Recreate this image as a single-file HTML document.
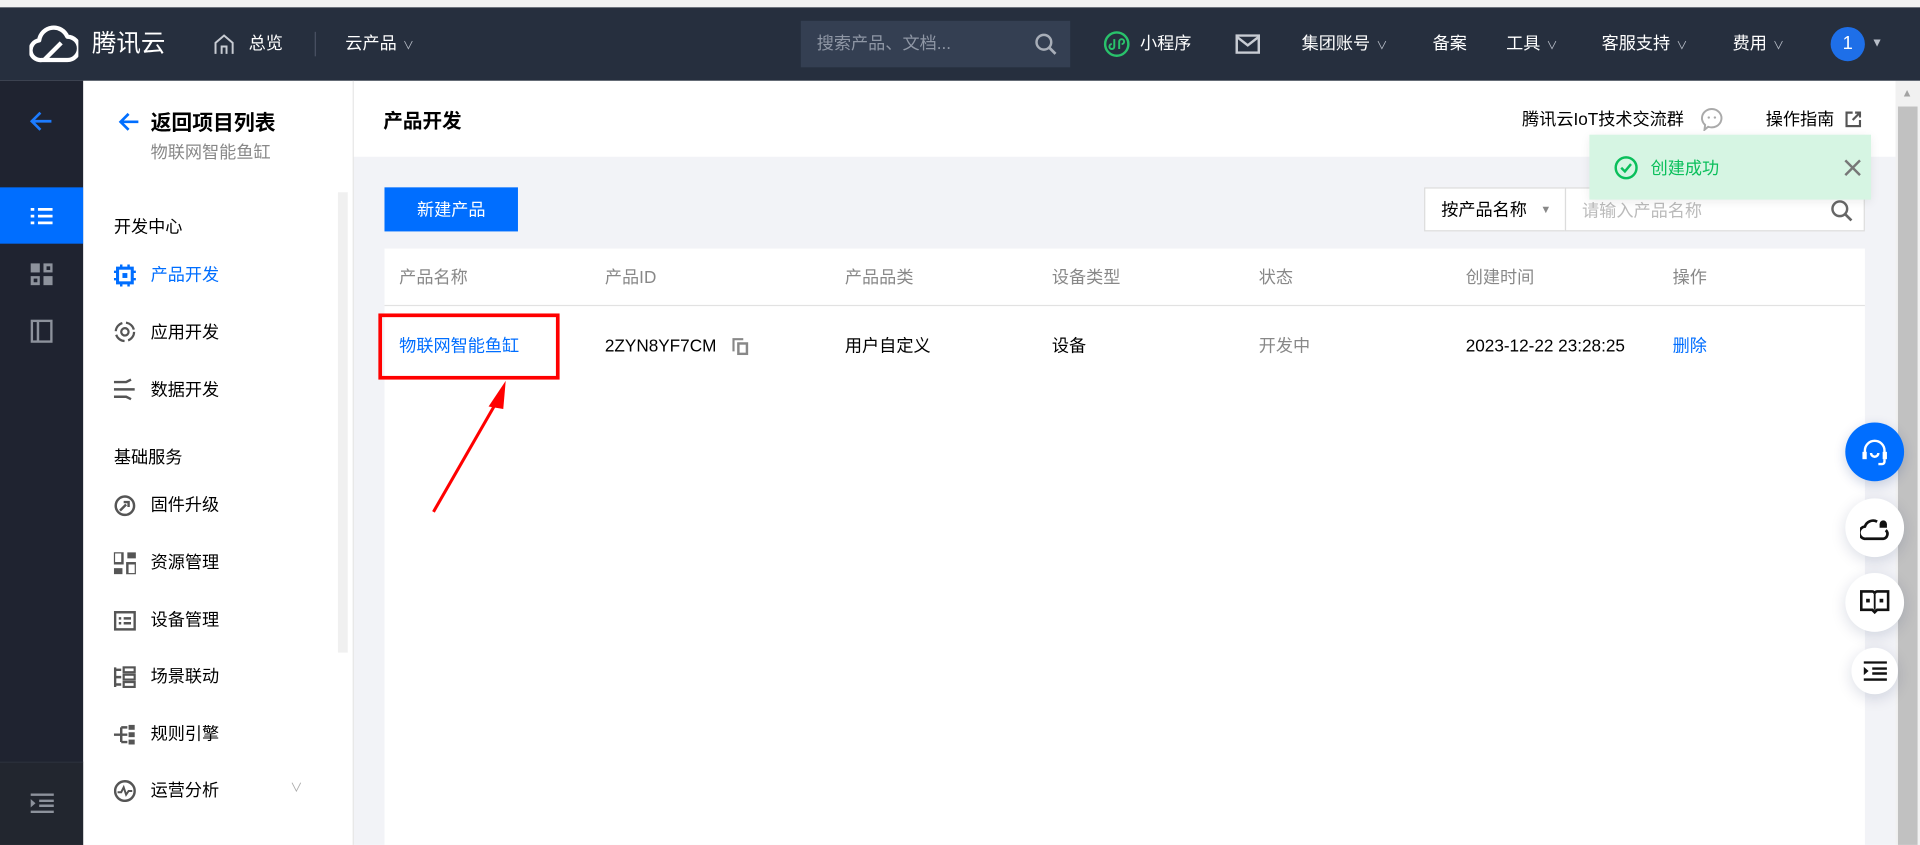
<!DOCTYPE html>
<html><head><meta charset="utf-8"><style>
*{margin:0;padding:0;box-sizing:border-box}
html,body{width:1920px;height:845px;overflow:hidden;background:#fff}
#s{position:absolute;left:0;top:0;width:1568px;height:690px;transform:scale(1.22449);transform-origin:0 0;font-family:"Liberation Sans","Noto Sans CJK SC",sans-serif;font-size:14px;color:#000;background:#f2f3f7}
.a{position:absolute}
.t{position:absolute;white-space:nowrap;line-height:1}
.nav .t{color:#fff;font-size:14px}
.car{font-size:9px;color:#b8bec8;margin-left:5px}
.side .t{font-size:14px;color:#000}
.ic{position:absolute}
</style></head><body><div id="s">
<div class="a" style="left:0;top:0;width:1568px;height:6px;background:#f1f1f1"></div>
<!-- navbar -->
<div class="a nav" style="left:0;top:6px;width:1568px;height:60px;background:#262f3e">
 <svg class="ic" style="left:24px;top:13px" width="40" height="34" viewBox="0 0 40 34"><path d="M10 30 A8 8 0 0 1 8 14 A12 12 0 0 1 31 11 A9.5 9.5 0 0 1 31 30 Z M12 30 L26 16" fill="none" stroke="#fff" stroke-width="3.5" stroke-linejoin="round"/></svg>
 <div class="t" style="left:75px;top:20px;font-size:20px">腾讯云</div>
 <svg class="ic" style="left:174px;top:21px" width="18" height="18" viewBox="0 0 18 18"><path d="M2 17V8L9 2l7 6v9M7 17v-6h4v6" fill="none" stroke="#c8ccd3" stroke-width="1.6"/></svg>
 <div class="t" style="left:203px;top:22px">总览</div>
 <div class="a" style="left:257px;top:20px;width:1px;height:20px;background:#4a5263"></div>
 <div class="t" style="left:282px;top:22px">云产品<span class="car">∨</span></div>
 <div class="a" style="left:654px;top:11px;width:220px;height:38px;background:#343f52"></div>
 <div class="t" style="left:667px;top:22px;color:#8f97a5">搜索产品、文档...</div>
 <svg class="ic" style="left:845px;top:21px" width="18" height="18" viewBox="0 0 18 18"><circle cx="7.5" cy="7.5" r="6" fill="none" stroke="#a8aeb8" stroke-width="2"/><path d="M12 12l5 5" stroke="#a8aeb8" stroke-width="2.2"/></svg>
 <svg class="ic" style="left:901px;top:19px" width="22" height="22" viewBox="0 0 22 22"><circle cx="11" cy="11" r="9.5" fill="none" stroke="#29c26b" stroke-width="2"/><path d="M9 7v6a2 2 0 1 1-2-2M13 15V9a2 2 0 1 1 2 2" fill="none" stroke="#29c26b" stroke-width="1.6"/></svg>
 <div class="t" style="left:931px;top:22px">小程序</div>
 <svg class="ic" style="left:1009px;top:22px" width="20" height="16" viewBox="0 0 20 16"><rect x="1" y="1" width="18" height="14" fill="none" stroke="#c8ccd3" stroke-width="2"/><path d="M1 2l9 7 9-7" fill="none" stroke="#c8ccd3" stroke-width="2"/></svg>
 <div class="t" style="left:1063px;top:22px">集团账号<span class="car">∨</span></div>
 <div class="t" style="left:1170px;top:22px">备案</div>
 <div class="t" style="left:1230px;top:22px">工具<span class="car">∨</span></div>
 <div class="t" style="left:1308px;top:22px">客服支持<span class="car">∨</span></div>
 <div class="t" style="left:1415px;top:22px">费用<span class="car">∨</span></div>
 <div class="a" style="left:1495px;top:16px;width:28px;height:28px;border-radius:50%;background:#1e6fe8;color:#fff;text-align:center;line-height:28px;font-size:15px">1</div>
 <div class="t" style="left:1528px;top:25px;font-size:10px;color:#b8bec8">▼</div>
</div>
<!-- rail -->
<div class="a" style="left:0;top:66px;width:68px;height:624px;background:#1f2330">
 <svg class="ic" style="left:23px;top:24px" width="20" height="18" viewBox="0 0 20 18"><path d="M19 9H3M10 2L3 9l7 7" fill="none" stroke="#1c7bff" stroke-width="2.2"/></svg>
 <div class="a" style="left:0;top:87px;width:68px;height:46px;background:#006eff"></div>
 <svg class="ic" style="left:25px;top:103px" width="18" height="15" viewBox="0 0 18 15"><path d="M0 2h3M6 2h12M0 7.5h3M6 7.5h12M0 13h3M6 13h12" stroke="#fff" stroke-width="2.2"/></svg>
 <svg class="ic" style="left:25px;top:149px" width="18" height="18" viewBox="0 0 18 18"><rect x="0" y="0" width="7.5" height="7.5" fill="#8d929c"/><rect x="10.5" y="0" width="7.5" height="7.5" fill="#8d929c"/><rect x="0" y="10.5" width="7.5" height="7.5" fill="#8d929c"/><rect x="10.5" y="10.5" width="7.5" height="7.5" fill="#8d929c"/><rect x="2.5" y="12.5" width="3" height="3" fill="#1f2330"/><rect x="13" y="2.5" width="3" height="3" fill="#1f2330"/></svg>
 <svg class="ic" style="left:25px;top:195px" width="18" height="19" viewBox="0 0 18 19"><rect x="1" y="1" width="16" height="17" fill="none" stroke="#8d929c" stroke-width="2"/><path d="M6 1v17" stroke="#8d929c" stroke-width="2"/></svg>
 <div class="a" style="left:0;top:556px;width:68px;height:68px;background:#22262f;border-top:1px solid #2b303b"></div>
 <svg class="ic" style="left:25px;top:582px" width="19" height="16" viewBox="0 0 19 16"><path d="M0 1h19M7 6h12M7 10h12M0 15h19" stroke="#8d929c" stroke-width="2"/><path d="M0 4.5l4 3.5-4 3.5z" fill="#8d929c"/></svg>
</div>
<!-- sidebar -->
<div class="a side" style="left:68px;top:66px;width:221px;height:624px;background:#fff;border-right:1px solid #e5e5e5">
 <svg class="ic" style="left:28px;top:25px" width="18" height="17" viewBox="0 0 18 17"><path d="M17 8.5H3M9 2L2.5 8.5 9 15" fill="none" stroke="#006eff" stroke-width="2.2"/></svg>
 <div class="t" style="left:55px;top:26px;font-size:17px;font-weight:bold">返回项目列表</div>
 <div class="t" style="left:55px;top:51px;color:#888">物联网智能鱼缸</div>
 <div class="a" style="left:208px;top:91px;width:8px;height:376px;background:#f0f0f0"></div>
 <div class="t" style="left:25px;top:112px">开发中心</div>
 <svg class="ic" style="left:25px;top:150px" width="18" height="18" viewBox="0 0 18 18"><rect x="3" y="3" width="12" height="12" fill="none" stroke="#006eff" stroke-width="2.5"/><rect x="7" y="7" width="4" height="4" fill="#006eff"/><path d="M6 0v3M12 0v3M6 15v3M12 15v3M0 6h3M0 12h3M15 6h3M15 12h3" stroke="#006eff" stroke-width="2"/></svg>
 <div class="t" style="left:55px;top:151px;color:#006eff">产品开发</div>
 <svg class="ic" style="left:25px;top:196px" width="18" height="18" viewBox="0 0 18 18"><circle cx="9" cy="9" r="7.5" fill="none" stroke="#555" stroke-width="1.8" stroke-dasharray="9 3"/><circle cx="9" cy="9" r="3" fill="none" stroke="#555" stroke-width="1.8"/></svg>
 <div class="t" style="left:55px;top:198px">应用开发</div>
 <svg class="ic" style="left:25px;top:243px" width="18" height="18" viewBox="0 0 18 18"><path d="M0 3h10l4-2M0 9h12l5 0M0 15h10l4 2" fill="none" stroke="#555" stroke-width="2"/></svg>
 <div class="t" style="left:55px;top:245px">数据开发</div>
 <div class="t" style="left:25px;top:300px">基础服务</div>
 <svg class="ic" style="left:25px;top:338px" width="18" height="18" viewBox="0 0 18 18"><circle cx="9" cy="9" r="7.5" fill="none" stroke="#555" stroke-width="2"/><path d="M5 13l5-5M8 6h4v4" fill="none" stroke="#555" stroke-width="2"/></svg>
 <div class="t" style="left:55px;top:339px">固件升级</div>
 <svg class="ic" style="left:25px;top:385px" width="18" height="18" viewBox="0 0 18 18"><rect x="0" y="0" width="7" height="9" fill="none" stroke="#555" stroke-width="2"/><rect x="11" y="0" width="7" height="5" fill="#555"/><rect x="0" y="13" width="7" height="5" fill="#555"/><rect x="11" y="9" width="7" height="9" fill="none" stroke="#555" stroke-width="2"/></svg>
 <div class="t" style="left:55px;top:386px">资源管理</div>
 <svg class="ic" style="left:25px;top:432px" width="18" height="18" viewBox="0 0 18 18"><rect x="1" y="2" width="16" height="14" fill="none" stroke="#555" stroke-width="2"/><path d="M4 7h2M8 7h6M4 11h2M8 11h6" stroke="#555" stroke-width="2"/></svg>
 <div class="t" style="left:55px;top:433px">设备管理</div>
 <svg class="ic" style="left:25px;top:478px" width="18" height="18" viewBox="0 0 18 18"><path d="M1 1v16M1 3h5M1 9h5M1 15h5" stroke="#555" stroke-width="2"/><rect x="8" y="1" width="9" height="4" fill="none" stroke="#555" stroke-width="1.8"/><rect x="8" y="7" width="9" height="4" fill="none" stroke="#555" stroke-width="1.8"/><rect x="8" y="13" width="9" height="4" fill="none" stroke="#555" stroke-width="1.8"/></svg>
 <div class="t" style="left:55px;top:479px">场景联动</div>
 <svg class="ic" style="left:25px;top:525px" width="18" height="18" viewBox="0 0 18 18"><path d="M0 9h6M6 3v12M6 3h5M6 9h5M6 15h5" stroke="#555" stroke-width="2"/><rect x="12" y="1" width="5" height="4" fill="#555"/><rect x="12" y="7" width="5" height="4" fill="#555"/><rect x="12" y="13" width="5" height="4" fill="#555"/></svg>
 <div class="t" style="left:55px;top:526px">规则引擎</div>
 <svg class="ic" style="left:25px;top:571px" width="18" height="18" viewBox="0 0 18 18"><circle cx="9" cy="9" r="8" fill="none" stroke="#555" stroke-width="2"/><path d="M3 10h3l2-4 2 6 2-3h3" fill="none" stroke="#555" stroke-width="1.6"/></svg>
 <div class="t" style="left:55px;top:572px">运营分析</div>
 <div class="t" style="left:169px;top:574px;font-size:10px;color:#aaa">∨</div>
</div>
<!-- main header -->
<div class="a" style="left:289px;top:66px;width:1259px;height:62px;background:#fff">
 <div class="t" style="left:24px;top:26px;font-size:16px;font-weight:bold">产品开发</div>
 <div class="t" style="left:954px;top:24px">腾讯云IoT技术交流群</div>
 <svg class="ic" style="left:1100px;top:22px" width="18" height="19" viewBox="0 0 18 19"><path d="M9 1a8 7.5 0 1 1-3 14.5L3 18l.5-4A8 7.5 0 0 1 9 1z" fill="none" stroke="#aaa" stroke-width="1.6"/><circle cx="6.5" cy="8" r="1" fill="#aaa"/><circle cx="11.5" cy="8" r="1" fill="#aaa"/></svg>
 <div class="t" style="left:1153px;top:24px">操作指南</div>
 <svg class="ic" style="left:1218px;top:25px" width="13" height="13" viewBox="0 0 13 13"><path d="M6 1H1v11h11V7M8 1h4v4M12 1L6 7" fill="none" stroke="#555" stroke-width="1.8"/></svg>
</div>
<!-- scrollbar -->
<div class="a" style="left:1548px;top:66px;width:20px;height:624px;background:#f1f1f1">
 <div class="t" style="left:5px;top:6px;font-size:9px;color:#a3a3a3">▲</div>
 <div class="a" style="left:2px;top:21px;width:16px;height:603px;background:#c1c1c1"></div>
</div>
<!-- toolbar -->
<div class="a" style="left:314px;top:153px;width:109px;height:36px;background:#006eff;color:#fff;text-align:center;line-height:36px">新建产品</div>
<div class="a" style="left:1163px;top:153px;width:116px;height:36px;background:#fff;border:1px solid #dcdcdc"><div class="t" style="left:13px;top:10px">按产品名称</div><div class="t" style="left:94px;top:13px;font-size:9px;color:#888">▼</div></div>
<div class="a" style="left:1278px;top:153px;width:245px;height:36px;background:#fff;border:1px solid #dcdcdc"><div class="t" style="left:13px;top:11px;color:#bbb">请输入产品名称</div>
<svg class="ic" style="left:216px;top:9px" width="18" height="18" viewBox="0 0 18 18"><circle cx="7.5" cy="7.5" r="6" fill="none" stroke="#666" stroke-width="2"/><path d="M12 12l5 5" stroke="#666" stroke-width="2.2"/></svg></div>
<!-- table -->
<div class="a" style="left:314px;top:203px;width:1209px;height:487px;background:#fff">
 <div class="a" style="left:0;top:46px;width:1209px;height:1px;background:#e2e2e2"></div>
 <div class="t" style="left:12px;top:16px;color:#888">产品名称</div>
 <div class="t" style="left:180px;top:16px;color:#888">产品ID</div>
 <div class="t" style="left:376px;top:16px;color:#888">产品品类</div>
 <div class="t" style="left:545px;top:16px;color:#888">设备类型</div>
 <div class="t" style="left:714px;top:16px;color:#888">状态</div>
 <div class="t" style="left:883px;top:16px;color:#888">创建时间</div>
 <div class="t" style="left:1052px;top:16px;color:#888">操作</div>
 <div class="t" style="left:12px;top:72px;color:#006eff">物联网智能鱼缸</div>
 <div class="t" style="left:180px;top:72px">2ZYN8YF7CM</div>
 <svg class="ic" style="left:284px;top:73px" width="14" height="14" viewBox="0 0 14 14"><path d="M1 11V1h8" fill="none" stroke="#888" stroke-width="1.8"/><rect x="5" y="4.5" width="7" height="8.5" fill="none" stroke="#888" stroke-width="2"/></svg>
 <div class="t" style="left:376px;top:72px">用户自定义</div>
 <div class="t" style="left:545px;top:72px">设备</div>
 <div class="t" style="left:714px;top:72px;color:#888">开发中</div>
 <div class="t" style="left:883px;top:72px">2023-12-22 23:28:25</div>
 <div class="t" style="left:1052px;top:72px;color:#006eff">删除</div>
</div>
<div class="a" style="left:309px;top:256px;width:148px;height:54px;border:3px solid #f00"></div>
<svg class="a" style="left:340px;top:300px" width="90" height="130" viewBox="0 0 90 130"><path d="M14 118L68 24" stroke="#f00" stroke-width="2.5"/><path d="M73 11L59 32 71 34z" fill="#f00"/></svg>
<!-- toast -->
<div class="a" style="left:1298px;top:110px;width:230px;height:53px;background:#d6f5e3;box-shadow:0 2px 8px rgba(0,0,0,.08)">
 <svg class="ic" style="left:20px;top:17px" width="20" height="20" viewBox="0 0 20 20"><circle cx="10" cy="10" r="8.5" fill="none" stroke="#0abf5b" stroke-width="2"/><path d="M6 10l3 3 5-6" fill="none" stroke="#0abf5b" stroke-width="2"/></svg>
 <div class="t" style="left:50px;top:20px;color:#0abf5b">创建成功</div>
 <svg class="ic" style="left:208px;top:20px" width="14" height="14" viewBox="0 0 14 14"><path d="M1 1l12 12M13 1L1 13" stroke="#777" stroke-width="2"/></svg>
</div>
<!-- floating -->
<div class="a" style="left:1507px;top:345px;width:48px;height:48px;border-radius:50%;background:#006eff;box-shadow:0 3px 10px rgba(0,40,120,.2)"><svg class="ic" style="left:12px;top:12px" width="24" height="24" viewBox="0 0 24 24"><path d="M4 14V11a8 8 0 0 1 16 0v3" fill="none" stroke="#fff" stroke-width="2"/><rect x="2" y="12" width="3.5" height="6" fill="#fff"/><rect x="18.5" y="12" width="3.5" height="6" fill="#fff"/><path d="M9 13a3 3 0 0 0 6 0M20 18v2a2 2 0 0 1-2 2h-3" fill="none" stroke="#fff" stroke-width="2"/></svg></div>
<div class="a" style="left:1507px;top:407px;width:48px;height:48px;border-radius:50%;background:#fff;box-shadow:0 3px 12px rgba(0,30,80,.15)"><svg class="ic" style="left:12px;top:13px" width="24" height="22" viewBox="0 0 24 22"><path d="M14 6a7 7 0 0 0-10 4 5 5 0 0 0 1 10h14a4 4 0 0 0 2-7" fill="none" stroke="#111" stroke-width="2.2"/><path d="M16 8a3 3 0 0 1 6 0v3h-6z" fill="#111"/></svg></div>
<div class="a" style="left:1507px;top:468px;width:48px;height:48px;border-radius:50%;background:#fff;box-shadow:0 3px 12px rgba(0,30,80,.15)"><svg class="ic" style="left:12px;top:13px" width="24" height="22" viewBox="0 0 24 22"><path d="M1 2h9a2 2 0 0 1 2 2 2 2 0 0 1 2-2h9v15h-9l-2 2-2-2H1z" fill="none" stroke="#111" stroke-width="2.2"/><path d="M12 4v13" stroke="#111" stroke-width="1.5"/><rect x="5" y="8" width="3" height="3" fill="#111"/><rect x="16" y="8" width="3" height="3" fill="#111"/></svg></div>
<div class="a" style="left:1512px;top:529px;width:38px;height:38px;border-radius:50%;background:#fff;box-shadow:0 3px 12px rgba(0,30,80,.15)"><svg class="ic" style="left:10px;top:11px" width="19" height="16" viewBox="0 0 19 16"><path d="M0 1h19M7 6h12M7 10h12M0 15h19" stroke="#111" stroke-width="2"/><path d="M0 4.5l4 3.5-4 3.5z" fill="#111"/></svg></div>
</div></body></html>
